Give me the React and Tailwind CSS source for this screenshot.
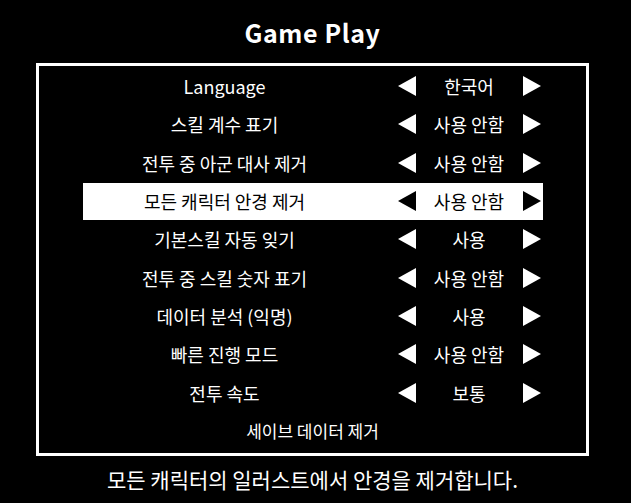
import React from "react";

const rows = [
  { label: "Language", value: "한국어" },
  { label: "스킬 계수 표기", value: "사용 안함" },
  { label: "전투 중 아군 대사 제거", value: "사용 안함" },
  { label: "모든 캐릭터 안경 제거", value: "사용 안함", active: true },
  { label: "기본스킬 자동 잊기", value: "사용" },
  { label: "전투 중 스킬 숫자 표기", value: "사용 안함" },
  { label: "데이터 분석 (익명)", value: "사용" },
  { label: "빠른 진행 모드", value: "사용 안함" },
  { label: "전투 속도", value: "보통" },
];

const Arrow = ({ dir, color }) => (
  <svg width="18" height="20" viewBox="0 0 18 20" className="shrink-0">
    {dir === "left" ? (
      <polygon points="18,0 18,20 0,10" fill={color} />
    ) : (
      <polygon points="0,0 0,20 18,10" fill={color} />
    )}
  </svg>
);

// 옵션 한 줄
const OptionRow = ({ label, value, active }) => (
  <div className="h-[38.3px] flex items-center justify-center">
    <div
      className={`w-[460px] h-[37px] flex items-center ${
        active ? "bg-white text-black" : "text-white"
      }`}
    >
      <div className="w-[284px] text-center">{label}</div>
      <div className="ml-[31px]">
        <Arrow dir="left" color={active ? "#000" : "#fff"} />
      </div>
      <div className="w-[107px] text-center">{value}</div>
      <Arrow dir="right" color={active ? "#000" : "#fff"} />
    </div>
  </div>
);

export default function App() {
  return (
    <div
      className="w-[631px] h-[503px] bg-black text-white flex flex-col items-center pr-[6px]"
      style={{ fontFamily: '"Noto Sans CJK KR", "Noto Sans", sans-serif' }}
    >
      <h1 className="h-[63px] flex items-center justify-center pt-[2px] text-[25px] font-bold tracking-[0.6px]">
        Game Play
      </h1>
      <div className="w-[553px] h-[393px] border-[3px] border-white pt-[1px] text-[18px] leading-none">
        {rows.map((r) => (
          <OptionRow key={r.label} {...r} />
        ))}
        <div className="h-[38.3px] flex items-center justify-center text-[17px]">
          세이브 데이터 제거
        </div>
      </div>
      <p className="mt-[8px] text-[21px] leading-[31px]">
        모든 캐릭터의 일러스트에서 안경을 제거합니다.
      </p>
    </div>
  );
}
